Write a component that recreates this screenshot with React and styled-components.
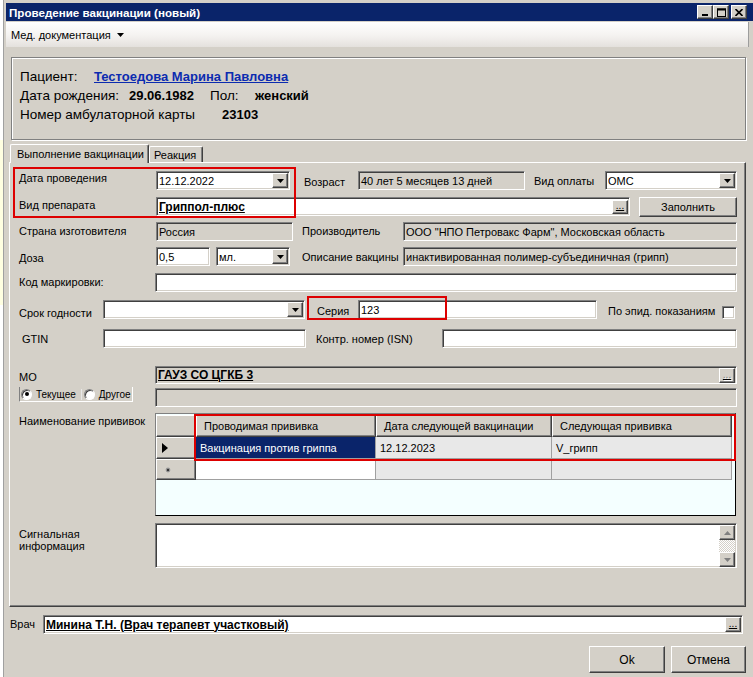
import React from 'react';
import styled, { createGlobalStyle, css } from 'styled-components';

const face = '#D4D0C8';

const GlobalStyle = createGlobalStyle`
  html, body { margin: 0; padding: 0; background: #fff; }
  body {
    font-family: "Liberation Sans", Arial, sans-serif;
    font-size: 11px;
    color: #000;
  }
  * { box-sizing: border-box; }
`;

// classic 3D borders
const sunken = css`
  border: 1px solid;
  border-color: #808080 #fff #fff #808080;
  box-shadow: inset 1px 1px #404040, inset -1px -1px ${face};
`;

const raised = css`
  border: 1px solid;
  border-color: #fff #404040 #404040 #fff;
  box-shadow: inset -1px -1px #808080;
  background: ${face};
`;

const Screen = styled.div`
  display: flex;
  width: 753px;
  height: 677px;
  overflow: hidden;
`;

const Backdrop = styled.div`
  flex: none;
  width: 4px;
  border-right: 1px solid #a0a0a0;
  background: linear-gradient(#fff 0 140px, #ffffe1 140px 305px, #fff 305px);
`;

const Window = styled.div`
  flex: 1;
  display: flex;
  flex-direction: column;
  background: ${face};
  padding: 3px 0 0 2px;
`;

const TitleBar = styled.div`
  flex: none;
  height: 18px;
  background: #0a246a;
  color: #fff;
  display: flex;
  align-items: center;
  justify-content: space-between;
  padding: 0 6px 0 3px;
  font-weight: bold;
  font-size: 11.6px;
`;

const CaptionButtons = styled.div`
  display: flex;
  align-items: center;
`;

const CaptionButton = styled.div`
  ${raised};
  width: 16px;
  height: 14px;
  margin-left: ${p => (p.$gap ? 2 : 0)}px;
  display: flex;
  align-items: center;
  justify-content: center;
`;

const MenuBar = styled.div`
  flex: none;
  margin-top: 1px;
  width: 743px;
  height: 25px;
  background: linear-gradient(#fff, #f4f2f0 55%, #e4e1dd);
  border-right: 1px solid #9d9d9d;
  display: flex;
  align-items: center;
  padding-left: 5px;
`;

const MenuItem = styled.div`
  display: flex;
  align-items: center;
  gap: 6px;
  font-size: 11px;
`;

const PatientBox = styled.div`
  flex: none;
  margin: 10px 0 0 5px;
  width: 735px;
  height: 83px;
  border: 1px solid #808080;
  box-shadow: inset 1px 1px #fff, 1px 1px #fff;
  padding: 9px 0 0 8px;
  font-size: 13.5px;
`;

const InfoRow = styled.div`
  display: flex;
  height: 19px;
  line-height: 19px;
  white-space: nowrap;
`;

const InfoText = styled.span`
  flex: none;
  width: ${p => (p.$w ? `${p.$w}px` : 'auto')};
  font-weight: ${p => (p.$bold ? 'bold' : 'normal')};
  font-size: ${p => (p.$bold ? '13px' : 'inherit')};
`;

const PatientLink = styled.a`
  color: #0b2bb0;
  font-weight: bold;
  font-size: 13px;
  text-decoration: underline;
`;

const TabStrip = styled.div`
  flex: none;
  display: flex;
  align-items: flex-end;
  height: 18px;
  margin: 4px 0 0 4px;
`;

const Tab = styled.div`
  position: relative;
  z-index: ${p => (p.$active ? 2 : 1)};
  width: ${p => p.$w}px;
  height: ${p => (p.$active ? 19 : 16)}px;
  margin-bottom: ${p => (p.$active ? -1 : 0)}px;
  background: ${face};
  border: 1px solid;
  border-color: #fff #404040 transparent #fff;
  border-bottom: none;
  box-shadow: inset -1px 0 #808080;
  border-radius: 2px 2px 0 0;
  padding: ${p => (p.$active ? '2px 0 0 6px' : '1px 0 0 4px')};
  font-size: 11px;
  line-height: 14px;
  white-space: nowrap;
`;

const TabPanel = styled.div`
  position: relative;
  flex: none;
  margin-left: 3px;
  width: 737px;
  height: 445px;
  border: 1px solid;
  border-color: #fff #404040 #404040 #fff;
  box-shadow: inset -1px -1px #808080;
  padding: 8px 8px 0 9px;
  display: flex;
  flex-direction: column;
`;

const Row = styled.div`
  flex: none;
  display: flex;
  align-items: flex-start;
  height: ${p => p.$h || 19}px;
  margin-top: ${p => p.$mt || 0}px;
`;

const Label = styled.div`
  flex: none;
  width: ${p => p.$w}px;
  padding-top: ${p => p.$pt || 0}px;
  padding-left: ${p => p.$pl || 0}px;
  line-height: ${p => p.$lh || 13}px;
  white-space: ${p => (p.$wrap ? 'normal' : 'nowrap')};
`;

const Gap = styled.div`
  flex: none;
  width: ${p => p.$w}px;
`;

const Field = styled.div`
  ${sunken};
  flex: none;
  width: ${p => p.$w}px;
  height: ${p => p.$h || 19}px;
  background: ${p => (p.$ro ? face : '#fff')};
  display: flex;
  align-items: center;
  padding: 0 1px 0 2px;
  white-space: nowrap;
  overflow: hidden;
  font-weight: ${p => (p.$bold ? 'bold' : 'normal')};
  font-size: ${p => (p.$bold ? 12 : 11)}px;
  text-decoration: ${p => (p.$bold ? 'underline' : 'none')};
`;

const FieldText = styled.span`
  flex: 1;
  overflow: hidden;
`;

const DropButton = styled.div`
  ${raised};
  flex: none;
  width: 16px;
  height: 15px;
  display: flex;
  align-items: center;
  justify-content: center;
`;

const DotsButton = styled.div`
  ${raised};
  flex: none;
  width: 16px;
  height: ${p => p.$h || 14}px;
  display: flex;
  align-items: flex-end;
  justify-content: center;
  font-size: 10px;
  line-height: 10px;
  padding-bottom: 2px;
  color: ${p => (p.$disabled ? '#808080' : '#000')};
  text-shadow: ${p => (p.$disabled ? '1px 1px #fff' : 'none')};
  text-decoration: none;
  font-weight: normal;
`;

const PushButton = styled.div`
  ${raised};
  flex: none;
  width: ${p => p.$w}px;
  height: ${p => p.$h}px;
  display: flex;
  align-items: center;
  justify-content: center;
  font-size: ${p => p.$fs || 11}px;
`;

const CheckBox = styled.div`
  ${sunken};
  flex: none;
  width: 13px;
  height: 13px;
  margin-top: 6px;
  background: #fff;
`;

const MoBlock = styled.div`
  flex: none;
  display: flex;
  margin-top: 18px;
  height: 41px;
`;

const MoLeft = styled.div`
  flex: none;
  width: 136px;
  display: flex;
  flex-direction: column;
`;

const MoRight = styled.div`
  flex: none;
  display: flex;
  flex-direction: column;
  gap: 4px;
`;

const RadioGroup = styled.div`
  display: flex;
  align-items: center;
  width: 114px;
  height: 15px;
  margin-top: 3px;
  border-left: 1px solid #808080;
  border-right: 1px solid #fff;
  border-bottom: 1px solid #fff;
  font-size: 10px;
`;

const RadioOption = styled.div`
  display: flex;
  align-items: center;
  gap: 4px;
  padding-left: ${p => p.$pl}px;
  border-left: ${p => (p.$sep ? '1px solid #e8e8e8' : 'none')};
  margin-left: ${p => p.$ml || 0}px;
`;

const RadioDot = styled.div`
  width: 11px;
  height: 11px;
  border-radius: 50%;
  background: #fff;
  border: 1px solid;
  border-color: #808080 #fff #fff #808080;
  box-shadow: inset 1px 1px #404040;
  display: flex;
  align-items: center;
  justify-content: center;
  &::after {
    content: '';
    width: 4px;
    height: 4px;
    border-radius: 50%;
    background: ${p => (p.$on ? '#000' : 'transparent')};
  }
`;

const Grid = styled.div`
  flex: none;
  width: 581px;
  height: 103px;
  border: 1px solid;
  border-color: #808080 #000 #000 #808080;
  background: #f4ffff;
  padding-top: 1px;
  display: grid;
  grid-template-columns: 40px 180px 176px 180px;
  grid-template-rows: 22px 22px 21px;
  align-content: start;
`;

const HeadCell = styled.div`
  ${raised};
  display: flex;
  align-items: center;
  padding-left: ${p => (p.$pad ? 7 : 0)}px;
  white-space: nowrap;
`;

const RowMark = styled.div`
  ${raised};
  display: flex;
  align-items: center;
  padding-left: ${p => p.$pl}px;
`;

const Cell = styled.div`
  display: flex;
  align-items: center;
  padding-left: 4px;
  white-space: nowrap;
  background: ${p => (p.$sel ? '#0a246a' : p.$white ? '#fff' : '#e8e8e8')};
  color: ${p => (p.$sel ? '#fff' : '#000')};
  border-right: 1px solid #a0a0a0;
  border-bottom: 1px solid #a0a0a0;
`;

const Memo = styled.div`
  ${sunken};
  flex: none;
  width: 582px;
  height: 45px;
  background: #fff;
  display: flex;
  justify-content: flex-end;
  padding: 1px 1px 0 0;
`;

const ScrollBar = styled.div`
  width: 16px;
  height: 42px;
  display: flex;
  flex-direction: column;
`;

const ScrollTrack = styled.div`
  flex: 1;
  background-color: #fff;
  background-image: repeating-conic-gradient(${face} 0 25%, #fff 0 50%);
  background-size: 2px 2px;
`;

const ScrollArrow = styled.div`
  ${raised};
  flex: none;
  height: 15px;
  display: flex;
  align-items: center;
  justify-content: center;
`;

const Highlight = styled.div`
  position: absolute;
  left: ${p => p.$x}px;
  top: ${p => p.$y}px;
  width: ${p => p.$w}px;
  height: ${p => p.$h}px;
  border: 2px solid #dd0000;
  pointer-events: none;
`;

const DoctorRow = styled.div`
  flex: none;
  display: flex;
  align-items: center;
  margin-top: 8px;
  height: 19px;
  padding-left: 4px;
`;

const ButtonRow = styled.div`
  flex: none;
  display: flex;
  justify-content: flex-end;
  gap: 6px;
  margin-top: 12px;
  padding-right: 7px;
`;

const Arrow = ({ color = '#000' }) => (
  <svg width="7" height="4" viewBox="0 0 7 4">
    <polygon points="0,0 7,0 3.5,4" fill={color} />
  </svg>
);

const Select = ({ w, children }) => (
  <Field $w={w}>
    <FieldText>{children}</FieldText>
    <DropButton>
      <Arrow />
    </DropButton>
  </Field>
);

export default function App() {
  return (
    <>
      <GlobalStyle />
      <Screen>
        <Backdrop />
        <Window>
          <TitleBar>
            <span>Проведение вакцинации (новый)</span>
            <CaptionButtons>
              <CaptionButton>
                <svg width="8" height="8" viewBox="0 0 8 8">
                  <rect x="1" y="6" width="6" height="2" fill="#000" />
                </svg>
              </CaptionButton>
              <CaptionButton>
                <svg width="9" height="9" viewBox="0 0 9 9">
                  <rect x="0.5" y="1" width="8" height="7.5" fill="none" stroke="#000" />
                  <rect x="0" y="0.5" width="9" height="2" fill="#000" />
                </svg>
              </CaptionButton>
              <CaptionButton $gap>
                <svg width="8" height="7" viewBox="0 0 8 7">
                  <path d="M0.5 0 L7.5 7 M7.5 0 L0.5 7" stroke="#000" strokeWidth="1.6" />
                </svg>
              </CaptionButton>
            </CaptionButtons>
          </TitleBar>

          <MenuBar>
            <MenuItem>
              Мед. документация
              <Arrow />
            </MenuItem>
          </MenuBar>

          <PatientBox>
            <InfoRow>
              <InfoText $w={74}>Пациент:</InfoText>
              <PatientLink>Тестоедова Марина Павловна</PatientLink>
            </InfoRow>
            <InfoRow>
              <InfoText $w={109}>Дата рождения:</InfoText>
              <InfoText $w={81} $bold>29.06.1982</InfoText>
              <InfoText $w={45}>Пол:</InfoText>
              <InfoText $bold>женский</InfoText>
            </InfoRow>
            <InfoRow>
              <InfoText $w={202}>Номер амбулаторной карты</InfoText>
              <InfoText $bold>23103</InfoText>
            </InfoRow>
          </PatientBox>

          <TabStrip>
            <Tab $active $w={139}>Выполнение вакцинации</Tab>
            <Tab $w={54}>Реакция</Tab>
          </TabStrip>

          <TabPanel>
            <Row>
              <Label $w={137} $pt={1}>Дата проведения</Label>
              <Select w={134}>12.12.2022</Select>
              <Gap $w={14} />
              <Label $w={54} $pt={5}>Возраст</Label>
              <Field $w={167} $ro>40 лет 5 месяцев 13 дней</Field>
              <Gap $w={9} />
              <Label $w={71} $pt={4}>Вид оплаты</Label>
              <Select w={132}>ОМС</Select>
            </Row>

            <Row $mt={7}>
              <Label $w={137} $pt={2}>Вид препарата</Label>
              <Field $w={474} $bold>
                <FieldText>Гриппол-плюс</FieldText>
                <DotsButton>...</DotsButton>
              </Field>
              <Gap $w={9} />
              <PushButton $w={98} $h={20}>Заполнить</PushButton>
            </Row>

            <Row $mt={6}>
              <Label $w={137} $pt={3}>Страна изготовителя</Label>
              <Field $w={137} $ro>Россия</Field>
              <Gap $w={9} />
              <Label $w={101} $pt={3}>Производитель</Label>
              <Field $w={334} $ro>ООО "НПО Петровакс Фарм", Московская область</Field>
            </Row>

            <Row $mt={6}>
              <Label $w={137} $pt={5}>Доза</Label>
              <Field $w={54}>0,5</Field>
              <Gap $w={6} />
              <Select w={74}>мл.</Select>
              <Gap $w={12} />
              <Label $w={101} $pt={4}>Описание вакцины</Label>
              <Field $w={334} $ro>инактивированная полимер-субъединичная (грипп)</Field>
            </Row>

            <Row $mt={7}>
              <Label $w={136} $pt={3}>Код маркировки:</Label>
              <Field $w={582} />
            </Row>

            <Row $mt={8} $h={20}>
              <Label $w={84} $pt={7}>Срок годности</Label>
              <Select w={202} />
              <Gap $w={12} />
              <Label $w={41} $pt={5}>Серия</Label>
              <Field $w={239}>123</Field>
              <Gap $w={11} />
              <Label $w={114} $pt={5}>По эпид. показаниям</Label>
              <CheckBox />
            </Row>

            <Row $mt={9}>
              <Label $w={84} $pt={4} $pl={3}>GTIN</Label>
              <Field $w={203} />
              <Gap $w={10} />
              <Label $w={126} $pt={4}>Контр. номер (ISN)</Label>
              <Field $w={295} />
            </Row>

            <MoBlock>
              <MoLeft>
                <Label $w={136} $pt={5}>МО</Label>
                <RadioGroup>
                  <RadioOption $pl={1}>
                    <RadioDot $on />
                    Текущее
                  </RadioOption>
                  <RadioOption $pl={2} $ml={5} $sep>
                    <RadioDot />
                    Другое
                  </RadioOption>
                </RadioGroup>
              </MoLeft>
              <MoRight>
                <Field $w={582} $h={18} $ro $bold>
                  <FieldText>ГАУЗ СО ЦГКБ 3</FieldText>
                  <DotsButton $disabled $h={15}>...</DotsButton>
                </Field>
                <Field $w={582} $h={19} $ro />
              </MoRight>
            </MoBlock>

            <Row $mt={6} $h={103}>
              <Label $w={136} $pt={2}>Наименование прививок</Label>
              <Grid>
                <HeadCell />
                <HeadCell $pad>Проводимая прививка</HeadCell>
                <HeadCell $pad>Дата следующей вакцинации</HeadCell>
                <HeadCell $pad>Следующая прививка</HeadCell>

                <RowMark $pl={5}>
                  <svg width="6" height="10" viewBox="0 0 6 10">
                    <polygon points="0,0 6,5 0,10" fill="#000" />
                  </svg>
                </RowMark>
                <Cell $sel>Вакцинация против гриппа</Cell>
                <Cell>12.12.2023</Cell>
                <Cell>V_грипп</Cell>

                <RowMark $pl={8}>
                  <svg width="6" height="6" viewBox="0 0 6 6">
                    <circle cx="3" cy="3" r="2.4" fill="#9a9a9a" />
                    <circle cx="3" cy="3" r="1.2" fill="#333" />
                  </svg>
                </RowMark>
                <Cell $white />
                <Cell />
                <Cell />
              </Grid>
            </Row>

            <Row $mt={7} $h={45}>
              <Label $w={136} $pt={5} $lh={12} $wrap>
                Сигнальная
                <br />
                информация
              </Label>
              <Memo>
                <ScrollBar>
                  <ScrollArrow>
                    <svg width="7" height="4" viewBox="0 0 7 4">
                      <polygon points="0,4 7,4 3.5,0" fill="#808080" />
                    </svg>
                  </ScrollArrow>
                  <ScrollTrack />
                  <ScrollArrow>
                    <Arrow color="#808080" />
                  </ScrollArrow>
                </ScrollBar>
              </Memo>
            </Row>

            <Highlight $x={3} $y={4} $w={283} $h={51} />
            <Highlight $x={297} $y={133} $w={140} $h={24} />
            <Highlight $x={184} $y={251} $w={542} $h={47} />
          </TabPanel>

          <DoctorRow>
            <Label $w={33}>Врач</Label>
            <Field $w={700} $bold>
              <FieldText>Минина Т.Н. (Врач терапевт участковый)</FieldText>
              <DotsButton $h={15}>...</DotsButton>
            </Field>
          </DoctorRow>

          <ButtonRow>
            <PushButton $w={76} $h={27} $fs={12}>Ok</PushButton>
            <PushButton $w={75} $h={27} $fs={12}>Отмена</PushButton>
          </ButtonRow>
        </Window>
      </Screen>
    </>
  );
}
